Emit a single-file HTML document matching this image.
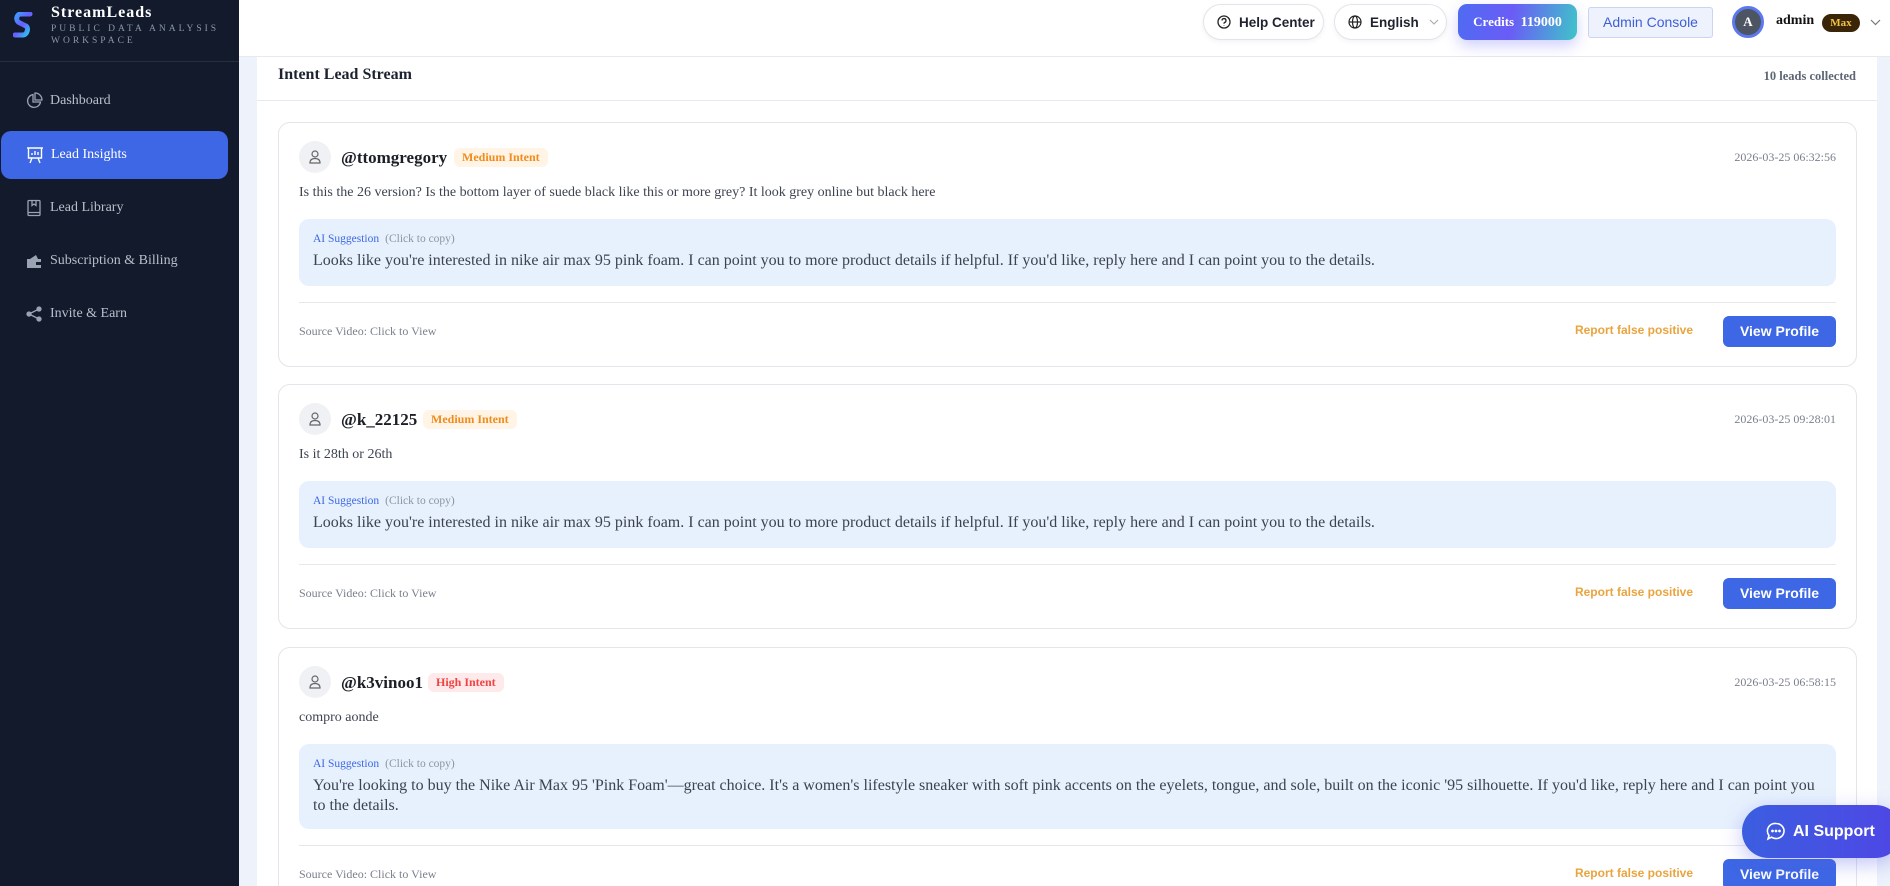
<!DOCTYPE html>
<html style="overflow:hidden;height:886px"><head><meta charset="utf-8"><style>
*{box-sizing:border-box;margin:0;padding:0}
body{width:1890px;height:886px;overflow:hidden;background:#eef2fb;font-family:"Liberation Serif",serif;position:relative}
.side{position:absolute;left:0;top:0;width:239px;height:886px;background:#121a2b}
.logo{height:62px;border-bottom:1px solid #262f40;position:relative}
.logo .t{position:absolute;left:51px;top:4px;color:#fff;font-weight:bold;font-size:16px;letter-spacing:1px}
.logo .s{position:absolute;left:51px;top:24px;color:#8b97aa;font-size:9.5px;letter-spacing:3px;line-height:11.5px}
.nav{position:absolute;left:0;width:239px;height:48px;color:#b8c0cc;font-size:14px;display:flex;align-items:center;padding-left:50px}
.nav svg{position:absolute;left:25px;top:15px}
.nav.act{left:1px;width:227px;background:#3d67e4;color:#fff;border-radius:10px}
.hdr{position:absolute;left:239px;top:0;right:0;height:57px;background:#fff;border-bottom:1px solid #e6e9ef}
.pill{position:absolute;top:4px;height:36px;border:1px solid #e1e4ea;border-radius:18px;background:#fff;font-family:"Liberation Sans",sans-serif;font-weight:bold;font-size:13.5px;color:#1f2330;display:flex;align-items:center;box-shadow:0 2px 6px rgba(0,0,0,.05)}
.panel{position:absolute;left:257px;top:57px;width:1620px;height:829px;background:#fff;overflow:hidden}
.ph{height:44px;border-bottom:1px solid #e6e9ef;position:relative}
.ph .a{position:absolute;left:21px;top:9px;font-weight:bold;font-size:16px;color:#1c2230}
.ph .b{position:absolute;right:21px;top:12px;font-weight:bold;font-size:12.5px;color:#5f6673}
.card{position:absolute;left:21px;width:1579px;border:1px solid #e3e5ea;border-radius:12px;background:#fff}
.av{position:absolute;left:20px;top:18px;width:32px;height:32px;border-radius:50%;background:#f0f1f4}
.av svg{position:absolute;left:9px;top:8px}
.un{position:absolute;left:62px;top:25px;font-weight:bold;font-size:17px;color:#1c1f26}
.tag{position:absolute;top:25px;height:19px;border-radius:6px;font-weight:bold;font-size:12px;padding:2px 8px}
.tm{position:absolute;right:20px;top:27px;font-size:12px;color:#7a808c}
.ct{position:absolute;left:20px;top:62px;font-size:14px;color:#3d4350}
.ai{position:absolute;left:20px;right:20px;border-radius:10px;background:#e7f1fd;padding:14px 14px}
.ai .l{font-size:11.5px;color:#3d67e4}.ai .l span{color:#8c93a0;margin-left:6px}
.ai .x{font-size:16px;color:#3b4250;margin-top:6px;line-height:20px}
.dv{position:absolute;left:20px;right:20px;height:1px;background:#e6e8ec}
.src{position:absolute;left:20px;font-size:12px;color:#7a808c}
.rp{position:absolute;right:163px;font-family:"Liberation Sans",sans-serif;font-weight:bold;font-size:12px;color:#eaa43e}
.vp{position:absolute;right:20px;width:113px;height:31px;background:#3d67e4;border-radius:6px;color:#fff;font-family:"Liberation Sans",sans-serif;font-weight:bold;font-size:14px;text-align:center;line-height:31px}
</style></head><body>
<div class="side">
 <div class="logo">
  <svg style="position:absolute;left:13px;top:12px" width="20" height="26" viewBox="0 0 20 26"><defs><linearGradient id="g" x1="0" y1="0" x2="1" y2="1"><stop offset="0" stop-color="#3aa0ff"/><stop offset=".5" stop-color="#6a5cff"/><stop offset="1" stop-color="#22d3ee"/></linearGradient></defs><path d="M17 2H8C3 2 2 9 7 11L13 14C16 16 14 23 10 23H2" stroke="url(#g)" stroke-width="5" fill="none" stroke-linecap="round"/></svg>
  <div class="t">StreamLeads</div>
  <div class="s">PUBLIC DATA ANALYSIS<br>WORKSPACE</div>
 </div>
 <div class="nav" style="top:77px"><svg width="18" height="18" viewBox="0 0 18 18" fill="none" stroke="#9aa3b2" stroke-width="1.3"><path d="M8 2.5A6.5 6.5 0 1 0 15.5 10H8Z"/><path d="M10 1v7h7A7 7 0 0 0 10 1Z"/></svg>Dashboard</div>
 <div class="nav act" style="top:131px"><svg width="18" height="18" viewBox="0 0 18 18" fill="none" stroke="#fff" stroke-width="1.4"><path d="M1 2h16M2.5 2v10h13V2M6 12l-2 5M12 12l2 5M6 9V7M9 9V5M12 9V6"/></svg>Lead Insights</div>
 <div class="nav" style="top:184px"><svg width="18" height="18" viewBox="0 0 18 18" fill="none" stroke="#9aa3b2" stroke-width="1.3"><rect x="3" y="1.5" width="12" height="15" rx="1"/><path d="M3 13.5h12M7 1.5v5l2-1.5 2 1.5v-5"/></svg>Lead Library</div>
 <div class="nav" style="top:237px"><svg width="18" height="18" viewBox="0 0 18 18"><path d="M2 7h14v9H2z" fill="#9aa3b2"/><path d="M5 7l6-4 2 4" fill="#9aa3b2"/><rect x="11" y="10" width="5" height="3" fill="#121a2b"/></svg>Subscription &amp; Billing</div>
 <div class="nav" style="top:290px"><svg width="18" height="18" viewBox="0 0 18 18" fill="#9aa3b2" stroke="#9aa3b2" stroke-width="1.3"><circle cx="14" cy="4" r="2"/><circle cx="4" cy="9" r="2"/><circle cx="14" cy="14" r="2"/><path d="M4 9L14 4M4 9l10 5"/></svg>Invite &amp; Earn</div>
</div>
<div class="hdr">
 <div class="pill" style="left:964px;width:121px;padding-left:13px"><svg width="14" height="14" viewBox="0 0 14 14" fill="none" stroke="#222" stroke-width="1.3" style="margin-right:8px"><circle cx="7" cy="7" r="6"/><path d="M5 5.5a2 2 0 1 1 2.5 2c-.5.2-.5.6-.5 1.2M7 10.5v.5"/></svg>Help Center</div>
 <div class="pill" style="left:1095px;width:113px;padding-left:13px"><svg width="14" height="14" viewBox="0 0 14 14" fill="none" stroke="#222" stroke-width="1.2" style="margin-right:8px"><circle cx="7" cy="7" r="6"/><ellipse cx="7" cy="7" rx="2.5" ry="6"/><path d="M1 7h12"/></svg>English<svg style="margin-left:10px" width="10" height="6" viewBox="0 0 10 6" fill="none" stroke="#aaa" stroke-width="1.1"><path d="M1 1l4 4 4-4"/></svg></div>
 <div style="position:absolute;left:1219px;top:4px;width:119px;height:36px;border-radius:9px;background:linear-gradient(100deg,#4f6bf2 0%,#6a5cf6 45%,#3fc4c9 100%);color:#fff;font-weight:bold;font-size:13px;text-align:center;line-height:36px;box-shadow:0 6px 14px rgba(100,100,250,.3)">Credits&nbsp; <span style="font-size:14px">119000</span></div>
 <div style="position:absolute;left:1349px;top:7px;width:125px;height:31px;border:1px solid #c9d4f6;background:#eef2fd;border-radius:3px;color:#3d5fd6;font-family:'Liberation Sans',sans-serif;font-size:14px;text-align:center;line-height:29px">Admin Console</div>
 <div style="position:absolute;left:1493px;top:6px;width:32px;height:32px;border-radius:50%;background:#4d5563;border:3px solid #5b78f0;color:#fff;font-weight:bold;font-size:13px;text-align:center;line-height:26px">A</div>
 <div style="position:absolute;left:1537px;top:13px;font-weight:bold;font-size:14px;color:#111">admin</div>
 <div style="position:absolute;left:1583px;top:14px;width:38px;height:18px;border-radius:9px;background:#3a2508;color:#f1c24a;font-weight:bold;font-size:11px;text-align:center;line-height:18px">Max</div>
 <svg style="position:absolute;left:1631px;top:19px" width="11" height="7" viewBox="0 0 11 7" fill="none" stroke="#777" stroke-width="1.2"><path d="M1 1l4.5 4.5L10 1"/></svg>
</div>
<div class="panel">
 <div class="ph"><div class="a">Intent Lead Stream</div><div class="b">10 leads collected</div></div>

 <div class="card" style="top:65px;height:245px">
  <div class="av"><svg width="14" height="15" viewBox="0 0 14 15" fill="none" stroke="#666" stroke-width="1.2"><circle cx="7" cy="5" r="3"/><path d="M2 14c0-3 2-4.5 5-4.5s5 1.5 5 4.5z"/></svg></div>
  <div class="un">@ttomgregory</div><div class="tag" style="left:175px;background:#fff4e5;color:#f08c1c">Medium Intent</div>
  <div class="tm">2026-03-25 06:32:56</div>
  <div class="ct">Is this the 26 version? Is the bottom layer of suede black like this or more grey? It look grey online but black here</div>
  <div class="ai" style="top:96px;height:67px"><div class="l">AI Suggestion<span>(Click to copy)</span></div><div class="x">Looks like you're interested in nike air max 95 pink foam. I can point you to more product details if helpful. If you'd like, reply here and I can point you to the details.</div></div>
  <div class="dv" style="top:179px"></div>
  <div class="src" style="top:201px">Source Video: Click to View</div>
  <div class="rp" style="top:200px">Report false positive</div>
  <div class="vp" style="top:193px">View Profile</div>
 </div>

 <div class="card" style="top:327px;height:245px">
  <div class="av"><svg width="14" height="15" viewBox="0 0 14 15" fill="none" stroke="#666" stroke-width="1.2"><circle cx="7" cy="5" r="3"/><path d="M2 14c0-3 2-4.5 5-4.5s5 1.5 5 4.5z"/></svg></div>
  <div class="un">@k_22125</div><div class="tag" style="left:144px;background:#fff4e5;color:#f08c1c">Medium Intent</div>
  <div class="tm">2026-03-25 09:28:01</div>
  <div class="ct">Is it 28th or 26th</div>
  <div class="ai" style="top:96px;height:67px"><div class="l">AI Suggestion<span>(Click to copy)</span></div><div class="x">Looks like you're interested in nike air max 95 pink foam. I can point you to more product details if helpful. If you'd like, reply here and I can point you to the details.</div></div>
  <div class="dv" style="top:179px"></div>
  <div class="src" style="top:201px">Source Video: Click to View</div>
  <div class="rp" style="top:200px">Report false positive</div>
  <div class="vp" style="top:193px">View Profile</div>
 </div>

 <div class="card" style="top:590px;height:280px">
  <div class="av"><svg width="14" height="15" viewBox="0 0 14 15" fill="none" stroke="#666" stroke-width="1.2"><circle cx="7" cy="5" r="3"/><path d="M2 14c0-3 2-4.5 5-4.5s5 1.5 5 4.5z"/></svg></div>
  <div class="un">@k3vinoo1</div><div class="tag" style="left:149px;background:#feeaea;color:#ef4444">High Intent</div>
  <div class="tm">2026-03-25 06:58:15</div>
  <div class="ct">compro aonde</div>
  <div class="ai" style="top:96px;height:85px"><div class="l">AI Suggestion<span>(Click to copy)</span></div><div class="x">You're looking to buy the Nike Air Max 95 'Pink Foam'—great choice. It's a women's lifestyle sneaker with soft pink accents on the eyelets, tongue, and sole, built on the iconic '95 silhouette. If you'd like, reply here and I can point you to the details.</div></div>
  <div class="dv" style="top:197px"></div>
  <div class="src" style="top:219px">Source Video: Click to View</div>
  <div class="rp" style="top:218px">Report false positive</div>
  <div class="vp" style="top:211px">View Profile</div>
 </div>
</div>
<div style="position:absolute;left:1742px;top:805px;width:160px;height:53px;border-radius:27px;background:linear-gradient(90deg,#3b5ee0,#4f46e5);color:#fff;font-family:'Liberation Sans',sans-serif;font-weight:bold;font-size:16px;line-height:53px;padding-left:51px;box-shadow:0 6px 20px rgba(80,90,230,.35)">
 <svg style="position:absolute;left:24px;top:17px" width="20" height="19" viewBox="0 0 20 19" fill="none" stroke="#fff" stroke-width="1.6"><path d="M10 1.5a8 7.5 0 1 1-4.5 13.7L2 17l1-3.5A7.5 7.5 0 0 1 10 1.5z"/><circle cx="6.5" cy="9" r=".6" fill="#fff"/><circle cx="10" cy="9" r=".6" fill="#fff"/><circle cx="13.5" cy="9" r=".6" fill="#fff"/></svg>AI Support</div>
</body></html>
